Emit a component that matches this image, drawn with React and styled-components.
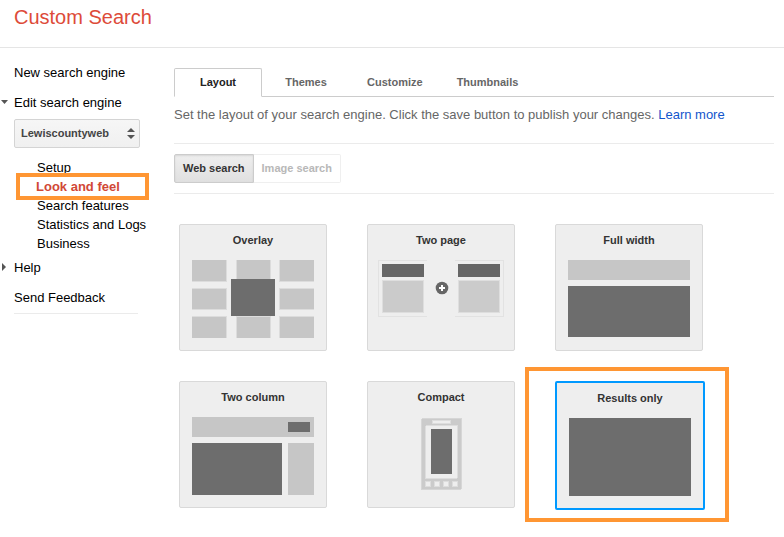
import React, { useState } from 'react';
import styled, { createGlobalStyle, css } from 'styled-components';

const GlobalStyle = createGlobalStyle`
    *, *::before, *::after {
        box-sizing: border-box;
    }

    body {
        margin: 0;
        background: #fff;
        color: #000;
        font-family: "Liberation Sans", Arial, sans-serif;
        font-size: 13px;
    }

    button, select {
        font-family: inherit;
    }
`

const highlight = css`
    content: '';
    position: absolute;
    z-index: 1;
    border: 4px solid #ff9633;
    pointer-events: none;
`

const Header = styled.header`
    padding: 4px 14px 17px;
    border-bottom: 1px solid #e5e5e5;
`

const Title = styled.h1`
    margin: 0;
    color: #dd4b39;
    font-size: 20px;
    font-weight: normal;
    line-height: 26px;
`

const Page = styled.div`
    display: flex;
    align-items: flex-start;
`

const Sidebar = styled.nav`
    flex: 0 0 174px;
    padding-top: 10px;
`

const Entry = styled.div`
    display: flex;
    align-items: center;
    height: 30px;
    padding-bottom: 2px;
`

const CaretSlot = styled.span`
    display: flex;
    flex: 0 0 14px;
    padding-left: 1px;
`

const SideLink = styled.a`
    color: #000;
    line-height: 19px;
    text-decoration: none;
`

const EnginePicker = styled.div`
    position: relative;
    width: 126px;
    margin: 1px 0 10px 14px;
`

const EngineSelect = styled.select`
    appearance: none;
    display: block;
    width: 100%;
    height: 29px;
    padding: 0 20px 2px 6px;
    border: 1px solid #d4d4d4;
    border-radius: 2px;
    background: linear-gradient(#f6f6f6, #f0f0f0);
    color: #444;
    font-size: 11px;
    font-weight: bold;
`

const PickerArrows = styled.svg`
    position: absolute;
    top: 9px;
    right: 5px;
    pointer-events: none;
`

const SubMenu = styled.ul`
    margin: 0;
    padding: 0 0 0 37px;
    list-style: none;
`

const SubItem = styled.li`
    position: relative;
    height: 19px;

    ${props => props.$active && css`
        margin-left: -1px;

        a {
            color: #d14836;
            font-weight: bold;
        }

        &::after {
            ${highlight}
            top: -4px;
            left: -20px;
            width: 133px;
            height: 27px;
        }
    `}
`

const SideRule = styled.hr`
    width: 124px;
    margin: 0 0 0 14px;
    border: 0;
    border-top: 1px solid #ebebeb;
`

const Main = styled.main`
    flex: 1;
    min-width: 0;
    padding: 20px 10px 24px 0;
`

const Tabs = styled.div`
    display: flex;
    height: 29px;
    border-bottom: 1px solid #ccc;
`

const Tab = styled.button`
    min-width: 88px;
    height: 29px;
    padding: 0 17px 2px;
    border: 0;
    background: none;
    color: #666;
    font-size: 11px;
    font-weight: bold;
    cursor: pointer;

    ${props => props.$active && css`
        border: 1px solid #ccc;
        border-bottom-color: #fff;
        border-radius: 2px 2px 0 0;
        background: #fff;
        color: #222;
    `}
`

const Description = styled.p`
    margin: 0;
    padding: 8px 0 19px;
    border-bottom: 1px solid #ebebeb;
    color: #666;
    line-height: 19px;
`

const HelpLink = styled.a`
    color: #15c;
    text-decoration: none;
`

const Toolbar = styled.div`
    display: flex;
    padding: 10px 0;
    border-bottom: 1px solid #ebebeb;
`

const ModeButton = styled.button`
    height: 29px;
    padding: 0 8px 2px;
    border: 1px solid #efefef;
    border-left-width: 0;
    border-radius: 0 2px 2px 0;
    background: #fff;
    color: #b8b8b8;
    font-size: 11px;
    font-weight: bold;

    ${props => props.$active && css`
        border: 1px solid #ccc;
        border-radius: 2px 0 0 2px;
        background: linear-gradient(#eee, #e0e0e0);
        box-shadow: inset 0 1px 2px rgba(0, 0, 0, 0.1);
        color: #333;
    `}
`

const CardGrid = styled.div`
    display: grid;
    grid-template-columns: repeat(auto-fill, 148px);
    gap: 30px 40px;
    align-items: start;
    justify-items: start;
    padding: 30px 0 0 5px;
`

const Card = styled.button`
    position: relative;
    padding: 7px 12px 12px;
    border: 1px solid #d9d9d9;
    border-radius: 2px;
    background: #eee;
    color: #333;
    cursor: pointer;

    ${props => props.$active && css`
        border: 2px solid #09f;

        &::after {
            ${highlight}
            inset: -16px -26px -14px -32px;
        }
    `}
`

const CardTitle = styled.span`
    display: block;
    margin-bottom: 12px;
    font-size: 11px;
    font-weight: bold;
    line-height: 16px;
`

const Thumb = styled.svg.attrs({
    width: 122,
    height: 78,
    viewBox: '0 0 122 78',
    shapeRendering: 'crispEdges',
    'aria-hidden': true,
})`
    display: block;
    overflow: visible;
`

const LIGHT = '#c6c6c6';
const DARK = '#6d6d6d';

const OverlayThumb = () => (
    <Thumb>
        <path fill="#dcdcdc" d="M0 0h35v22H0zM44 0h35v22H44zM87 0h35v22H87zM0 28h35v22H0zM87 28h35v22H87zM0 56h35v22H0zM44 56h35v22H44zM87 56h35v22H87z" />
        <path fill={LIGHT} d="M0 0h34v21H0zM45 0h33v21H45zM88 0h34v21H88zM0 29h34v20H0zM88 29h34v20H88zM0 57h34v21H0zM45 57h33v21H45zM88 57h34v21H88z" />
        <rect x="39" y="19" width="44" height="37" fill={DARK} />
    </Thumb>
)

const TwoPageThumb = () => (
    <Thumb>
        <path fill="none" stroke="#e2e2e2" d="M47 .5H-1.5V56.5H47M75 .5H123.5V56.5H75" />
        {[2, 78].map(x => (
            <React.Fragment key={x}>
                <rect x={x} y="4" width="42" height="13" fill="#666" />
                <rect x={x} y="20" width="42" height="33" fill="#dedede" />
                <rect x={x + 1} y="21" width="40" height="31" fill="#cbcbcb" />
            </React.Fragment>
        ))}
        <circle cx="62" cy="28" r="6.3" fill="#666" shapeRendering="auto" />
        <path fill="#fff" d="M61 25h2v2h2v2h-2v2h-2v-2h-2v-2h2z" />
    </Thumb>
)

const FullWidthThumb = () => (
    <Thumb>
        <rect width="122" height="20" fill={LIGHT} />
        <rect y="26" width="122" height="51" fill={DARK} />
    </Thumb>
)

const TwoColumnThumb = () => (
    <Thumb>
        <rect width="122" height="20" fill={LIGHT} />
        <rect x="96" y="5" width="22" height="10" fill={DARK} />
        <rect y="26" width="90" height="52" fill={DARK} />
        <rect x="96" y="26" width="26" height="52" fill={LIGHT} />
    </Thumb>
)

const CompactThumb = () => (
    <Thumb>
        <rect x="41" y="1" width="41" height="72" rx="2" fill="#d6d6d6" />
        <rect x="42" y="2" width="39" height="70" fill="#cbcbcb" />
        <rect x="52" y="3" width="19" height="4" fill="#ddd" />
        <rect x="53" y="4" width="17" height="2" fill="#eee" />
        <rect x="45" y="8" width="33" height="54" rx="2" fill="#ddd" />
        <rect x="46" y="9" width="31" height="52" rx="1" fill="#eee" />
        <rect x="51" y="12" width="21" height="45" fill={DARK} />
        {[45, 54, 63, 72].map(x => (
            <React.Fragment key={x}>
                <rect x={x} y="64" width="6" height="6" fill="#ddd" />
                <rect x={x + 1} y="65" width="4" height="4" fill="#eee" />
            </React.Fragment>
        ))}
    </Thumb>
)

const ResultsOnlyThumb = () => (
    <Thumb>
        <rect width="122" height="78" fill={DARK} />
    </Thumb>
)

const layouts = [
    { name: 'Overlay', Picture: OverlayThumb },
    { name: 'Two page', Picture: TwoPageThumb },
    { name: 'Full width', Picture: FullWidthThumb },
    { name: 'Two column', Picture: TwoColumnThumb },
    { name: 'Compact', Picture: CompactThumb },
    { name: 'Results only', Picture: ResultsOnlyThumb },
];

const tabs = ['Layout', 'Themes', 'Customize', 'Thumbnails'];
const sections = ['Setup', 'Look and feel', 'Search features', 'Statistics and Logs', 'Business'];

const Caret = ({ open }) => (
    <svg width="8" height="8" viewBox="0 0 8 8" aria-hidden="true">
        <path fill="#555" d={open ? 'M0 2h7L3.5 6z' : 'M1 0v8l4-4z'} />
    </svg>
)

const SideEntry = ({ children, caret, open }) => (
    <Entry>
        <CaretSlot>{caret && <Caret open={open} />}</CaretSlot>
        <SideLink href="#">{children}</SideLink>
    </Entry>
)

const App = () => {
    const [tab, setTab] = useState('Layout');
    const [layout, setLayout] = useState('Results only');

    return (
        <React.Fragment>
            <GlobalStyle />
            <Header>
                <Title>Custom Search</Title>
            </Header>
            <Page>
                <Sidebar>
                    <SideEntry>New search engine</SideEntry>
                    <SideEntry caret open>Edit search engine</SideEntry>
                    <EnginePicker>
                        <EngineSelect aria-label="Search engine">
                            <option>Lewiscountyweb</option>
                        </EngineSelect>
                        <PickerArrows width="8" height="11" viewBox="0 0 8 11" aria-hidden="true">
                            <path fill="#555" d="M0 4l4-4 4 4zM0 7h8l-4 4z" />
                        </PickerArrows>
                    </EnginePicker>
                    <SubMenu>
                        {sections.map(name => (
                            <SubItem key={name} $active={name === 'Look and feel'}>
                                <SideLink href="#">{name}</SideLink>
                            </SubItem>
                        ))}
                    </SubMenu>
                    <SideEntry caret>Help</SideEntry>
                    <SideEntry>Send Feedback</SideEntry>
                    <SideRule />
                </Sidebar>
                <Main>
                    <Tabs role="tablist">
                        {tabs.map(name => (
                            <Tab
                                key={name}
                                role="tab"
                                aria-selected={name === tab}
                                $active={name === tab}
                                onClick={() => setTab(name)}
                            >
                                {name}
                            </Tab>
                        ))}
                    </Tabs>
                    <Description>
                        Set the layout of your search engine. Click the save button to publish your changes.{' '}
                        <HelpLink href="#">Learn more</HelpLink>
                    </Description>
                    <Toolbar>
                        <ModeButton $active>Web search</ModeButton>
                        <ModeButton disabled>Image search</ModeButton>
                    </Toolbar>
                    <CardGrid>
                        {layouts.map(({ name, Picture }) => (
                            <Card
                                key={name}
                                aria-pressed={name === layout}
                                $active={name === layout}
                                onClick={() => setLayout(name)}
                            >
                                <CardTitle>{name}</CardTitle>
                                <Picture />
                            </Card>
                        ))}
                    </CardGrid>
                </Main>
            </Page>
        </React.Fragment>
    )
}

export default App;
